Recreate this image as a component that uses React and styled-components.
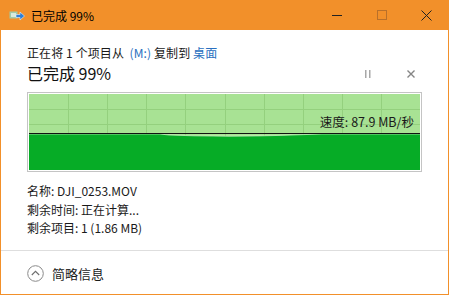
import React from 'react';
import styled, { createGlobalStyle } from 'styled-components';

const ORANGE = '#F2902A';

const GlobalStyle = createGlobalStyle`
    html, body {
        margin: 0;
        padding: 0;
        background: #ffffff;
    }
    body {
        font-family: "Noto Sans CJK SC", "Noto Sans", "Liberation Sans", sans-serif;
        color: #1a1a1a;
    }
`;

function CopyIcon() {
    return (
        <svg width="16" height="12" viewBox="0 0 16 12">
            <rect x="0.5" y="1.5" width="8" height="7" fill="#9fc9a8" />
            <rect x="2" y="3" width="5" height="4" fill="#d8eadb" />
            <path d="M7 4.5 H11 V2 L15.5 6 L11 10 V7.5 H7 Z" fill="#2f7fd6" stroke="#e8f2fc" strokeWidth="0.6" />
        </svg>
    );
}

function CollapseIcon() {
    return (
        <svg width="17" height="17" viewBox="0 0 17 17">
            <circle cx="8.5" cy="8.5" r="7.8" fill="none" stroke="#8a8a8a" strokeWidth="1" />
            <path d="M4.8 10 L8.5 6.3 L12.2 10" fill="none" stroke="#6e6e6e" strokeWidth="1.1" />
        </svg>
    );
}

function SpeedGraph() {
    const w = 391;
    const h = 76;
    const cols = 10;
    const rows = 5;
    const vlines = Array.from({ length: cols - 1 }, (_, i) => Math.round(((i + 1) * w) / cols) + 0.5);
    const hlines = Array.from({ length: rows - 1 }, (_, i) => Math.round(((i + 1) * h) / rows) + 0.5);
    // speed history: nearly flat, with a shallow dip in the middle
    const dip = 'M0 40 L131 40 L140 41 L165 41.8 L200 42.2 L230 41.9 L255 41.3 L275 40.6 L293 40 L391 40';
    return (
        <svg width={w} height={h} viewBox={`0 0 ${w} ${h}`} style={{ display: 'block' }}>
            <rect width={w} height={h} fill="#A8E294" />
            {vlines.map((x) => (
                <line key={x} x1={x} y1="0" x2={x} y2={h} stroke="#94D07E" strokeWidth="1" />
            ))}
            {hlines.map((y) => (
                <line key={y} x1="0" y1={y} x2={w} y2={y} stroke="#94D07E" strokeWidth="1" />
            ))}
            <path d={`${dip} L391 ${h} L0 ${h} Z`} fill="#06AC26" />
            <path d={dip} fill="none" stroke="#D6F2CC" strokeWidth="0.7" />
            <line x1="0" y1="39.5" x2={w} y2="39.5" stroke="#111" strokeWidth="1" />
        </svg>
    );
}

function App() {
    return (
        <>
            <GlobalStyle />
            <Window>
                <TitleBar>
                    <TitleIcon><CopyIcon /></TitleIcon>
                    <TitleText>已完成 99%</TitleText>
                    <WinButtons>
                        <WinButton>
                            <svg width="10" height="10" viewBox="0 0 10 10">
                                <line x1="0" y1="5.5" x2="10" y2="5.5" stroke="#222" strokeWidth="1" />
                            </svg>
                        </WinButton>
                        <WinButton>
                            <svg width="10" height="10" viewBox="0 0 10 10">
                                <rect x="0.5" y="0.5" width="9" height="9" fill="none" stroke="#B9702A" strokeWidth="1" />
                            </svg>
                        </WinButton>
                        <WinButton>
                            <svg width="11" height="11" viewBox="0 0 11 11">
                                <path d="M0.5 0.5 L10.5 10.5 M10.5 0.5 L0.5 10.5" stroke="#222" strokeWidth="1" />
                            </svg>
                        </WinButton>
                    </WinButtons>
                </TitleBar>

                <Body>
                    <FromTo>
                        正在将 1 个项目从 <Link>&nbsp;(M:)</Link> 复制到 <Link>桌面</Link>
                    </FromTo>
                    <StatusRow>
                        <Status>已完成 99%</Status>
                        <Controls>
                            <CtrlButton>
                                <svg width="6" height="8" viewBox="0 0 6 8">
                                    <rect x="0" y="0" width="1.5" height="8" fill="#a8a8a8" />
                                    <rect x="4" y="0" width="1.5" height="8" fill="#a8a8a8" />
                                </svg>
                            </CtrlButton>
                            <CtrlButton>
                                <svg width="8" height="8" viewBox="0 0 8 8">
                                    <path d="M0.5 0.5 L7.5 7.5 M7.5 0.5 L0.5 7.5" stroke="#858585" strokeWidth="1.4" />
                                </svg>
                            </CtrlButton>
                        </Controls>
                    </StatusRow>

                    <GraphFrame>
                        <SpeedGraph />
                        <SpeedLabel>速度: 87.9 MB/秒</SpeedLabel>
                    </GraphFrame>

                    <Details>
                        <DetailLine>名称: DJI_0253.MOV</DetailLine>
                        <DetailLine>剩余时间: 正在计算...</DetailLine>
                        <DetailLine>剩余项目: 1 (1.86 MB)</DetailLine>
                    </Details>
                </Body>

                <Footer>
                    <CollapseIcon />
                    <FooterText>简略信息</FooterText>
                </Footer>
            </Window>
        </>
    );
}

const Window = styled.div`
    width: 449px;
    height: 295px;
    box-sizing: border-box;
    border: 1px solid ${ORANGE};
    border-top: none;
    display: flex;
    flex-direction: column;
    background: #fff;
`;

const TitleBar = styled.div`
    height: 30px;
    margin: 0 -1px;
    background: ${ORANGE};
    display: flex;
    align-items: center;
    flex-shrink: 0;
`;

const TitleIcon = styled.div`
    width: 16px;
    height: 12px;
    margin-left: 9px;
    margin-top: 1px;
    display: flex;
`;

const TitleText = styled.div`
    margin-left: 6px;
    font-size: 12px;
    color: #000;
    flex: 1;
`;

const WinButtons = styled.div`
    display: flex;
    height: 100%;
`;

const WinButton = styled.div`
    width: 45px;
    height: 100%;
    display: flex;
    align-items: center;
    justify-content: center;
`;

const Body = styled.div`
    padding: 14px 26px 0 26px;
    flex: 1;
`;

const FromTo = styled.div`
    font-size: 12px;
    line-height: 18px;
    white-space: pre;
    letter-spacing: 0.1px;
`;

const Link = styled.span`
    color: #2a6fc0;
`;

const StatusRow = styled.div`
    display: flex;
    align-items: center;
    height: 22px;
`;

const Status = styled.div`
    font-size: 16px;
    line-height: 22px;
    flex: 1;
    color: #111;
`;

const Controls = styled.div`
    display: flex;
    align-items: center;
    gap: 33px;
    margin-right: 6px;
    margin-top: 2px;
`;

const CtrlButton = styled.div`
    display: flex;
    align-items: center;
    justify-content: center;
    width: 10px;
    height: 10px;
`;

const GraphFrame = styled.div`
    position: relative;
    margin-top: 8px;
    width: 395px;
    box-sizing: border-box;
    border: 1px solid #c4c4c4;
    padding: 1px;
    background: #fff;
`;

const SpeedLabel = styled.div`
    position: absolute;
    right: 7px;
    top: 21px;
    font-size: 12.5px;
    line-height: 16px;
    color: #1a1a1a;
`;

const Details = styled.div`
    margin-top: 10px;
    display: flex;
    flex-direction: column;
`;

const DetailLine = styled.div`
    font-size: 12px;
    line-height: 18.5px;
    color: #1a1a1a;
`;

const Footer = styled.div`
    height: 44px;
    flex-shrink: 0;
    border-top: 1px solid #dedede;
    display: flex;
    align-items: center;
    gap: 8px;
    padding-left: 26px;
    padding-top: 1px;
    box-sizing: border-box;
`;

const FooterText = styled.div`
    font-size: 13px;
    color: #1a1a1a;
`;

export default App;
